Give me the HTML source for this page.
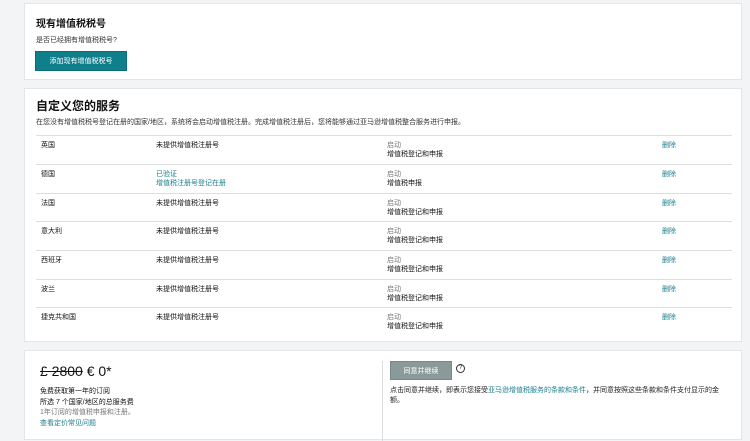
<!DOCTYPE html>
<html><head><meta charset="utf-8"><style>
*{margin:0;padding:0;box-sizing:border-box}
body{width:750px;height:428px;overflow:hidden;background:#f2f4f5;font-family:"Liberation Sans","Noto Sans CJK SC",sans-serif;color:#111;font-size:7px;position:relative}
.card{position:absolute;left:24px;width:718px;background:#fff;border:1px solid #e3e6e6}
h2{font-size:10px;font-weight:bold;position:absolute;left:11px}
.btn{position:absolute;left:10px;top:47px;width:92px;height:20px;background:#0f7f8c;color:#fff;font-size:7px;text-align:center;line-height:20px;border:1px solid #0b6b76}
.row{position:absolute;left:11px;width:696px;border-top:1px solid #ddd;height:29px}
.row span{position:absolute;top:5px;line-height:9px}
.g{color:#777}.l{color:#1a7f8e}
</style></head><body>
<div class="card" style="top:3px;height:77px">
<h2 style="top:11px">现有增值税税号</h2>
<div style="position:absolute;left:11px;top:31px;color:#333">是否已经拥有增值税税号?</div>
<div class="btn">添加现有增值税税号</div>
</div>
<div class="card" style="top:88px;height:254px">
<h2 style="top:8px;font-size:12px">自定义您的服务</h2>
<div style="position:absolute;left:11px;top:28px;color:#333">在您没有增值税税号登记在册的国家/地区，系统将会启动增值税注册。完成增值税注册后，您将能够通过亚马逊增值税整合服务进行申报。</div>
<div class="row" style="top:46px"><span style="left:5px">英国</span><span style="left:120px">未提供增值税注册号</span><span style="left:351px"><i class="g" style="font-style:normal">启动</i><br>增值税登记和申报</span><span class="l" style="left:626px">删除</span></div>
<div class="row" style="top:75px"><span style="left:5px">德国</span><span class="l" style="left:120px">已验证<br>增值税注册号登记在册</span><span style="left:351px"><i class="g" style="font-style:normal">启动</i><br>增值税申报</span><span class="l" style="left:626px">删除</span></div>
<div class="row" style="top:104px"><span style="left:5px">法国</span><span style="left:120px">未提供增值税注册号</span><span style="left:351px"><i class="g" style="font-style:normal">启动</i><br>增值税登记和申报</span><span class="l" style="left:626px">删除</span></div>
<div class="row" style="top:132px"><span style="left:5px">意大利</span><span style="left:120px">未提供增值税注册号</span><span style="left:351px"><i class="g" style="font-style:normal">启动</i><br>增值税登记和申报</span><span class="l" style="left:626px">删除</span></div>
<div class="row" style="top:161px"><span style="left:5px">西班牙</span><span style="left:120px">未提供增值税注册号</span><span style="left:351px"><i class="g" style="font-style:normal">启动</i><br>增值税登记和申报</span><span class="l" style="left:626px">删除</span></div>
<div class="row" style="top:190px"><span style="left:5px">波兰</span><span style="left:120px">未提供增值税注册号</span><span style="left:351px"><i class="g" style="font-style:normal">启动</i><br>增值税登记和申报</span><span class="l" style="left:626px">删除</span></div>
<div class="row" style="top:218px"><span style="left:5px">捷克共和国</span><span style="left:120px">未提供增值税注册号</span><span style="left:351px"><i class="g" style="font-style:normal">启动</i><br>增值税登记和申报</span><span class="l" style="left:626px">删除</span></div>
</div>
<div class="card" style="top:350px;height:90px">
<div style="position:absolute;left:15px;top:12px;font-size:14px"><s>£ 2800</s> € 0*</div>
<div style="position:absolute;left:15px;top:36px;line-height:10.5px">免费获取第一年的订阅<br>所选 7 个国家/地区的总服务费<br><span class="g">1年订阅的增值税申报和注册。</span><br><span class="l">查看定价常见问题</span></div>
<div style="position:absolute;left:357px;top:10px;width:1px;height:80px;background:#ddd"></div>
<div style="position:absolute;left:365px;top:10px;width:62px;height:19px;background:#8a9a9a;color:#fff;text-align:center;line-height:19px;border:1px solid #7a8888">同意并继续</div>
<div style="position:absolute;left:431px;top:13px;width:9px;height:9px;border:1px solid #333;border-radius:50%;font-size:6px;text-align:center;line-height:7px">?</div>
<div style="position:absolute;left:365px;top:35px;width:338px;line-height:10px;color:#222">点击同意并继续，即表示您接受<span class="l">亚马逊增值税服务的条款和条件</span>，并同意按照这些条款和条件支付显示的金额。</div>
</div>
</body></html>
